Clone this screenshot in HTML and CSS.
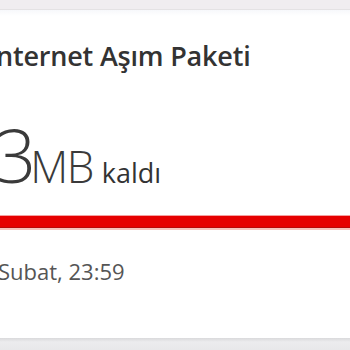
FILE: index.html
```html
<!DOCTYPE html>
<html lang="tr">
<head>
<meta charset="utf-8">
<link rel="stylesheet" href="styles.css">
</head>
<body>
<div class="page">
  <div class="topband"></div>
  <div class="card">
    <h1 class="title">İnternet Aşım Paketi</h1>
    <div class="amount"><span class="num">3</span><span class="unit">MB</span><span class="left">kaldı</span></div>
    <div class="bar"></div>
    <div class="date">Subat, 23:59</div>
  </div>
  <div class="bottomband"></div>
</div>
</body>
</html>
```
FILE: styles.css
```css
html, body {
  margin: 0;
  padding: 0;
  width: 350px;
  height: 350px;
  overflow: hidden;
  background: #e9e8ea;
}
.page {
  display: flex;
  flex-direction: column;
  height: 350px;
}
.topband {
  height: 9px;
  background: #f0edf0;
  border-bottom: 1px solid #e4e2e4;
}
.card {
  height: 328px;
  background: linear-gradient(#f7f8fb, #ffffff 6px);
  overflow: hidden;
  display: flex;
  flex-direction: column;
  font-family: "Open Sans", "Noto Sans", sans-serif;
}
.title {
  margin: 28px 0 0 -12px;
  font-size: 27px;
  font-weight: 600;
  color: #333333;
  line-height: 36px;
  white-space: nowrap;
  letter-spacing: -0.2px;
}
.amount {
  margin: 49px 0 0 -6px;
  display: flex;
  align-items: baseline;
  color: #3a3a3a;
  white-space: nowrap;
  height: 64px;
}
.num {
  font-size: 74px;
  font-weight: 300;
  line-height: 64px;
  letter-spacing: -6px;
}
.unit {
  font-size: 44px;
  font-weight: 300;
  line-height: 46px;
  letter-spacing: -1.5px;
}
.left {
  font-size: 27px;
  font-weight: 400;
  margin-left: 9px;
  color: #333333;
}
.bar {
  margin-top: 28px;
  height: 11px;
  background: #e60000;
  border-top: 1px solid #f5a0a0;
  border-bottom: 1px solid #b80808;
  box-shadow: 0 2px 0 #f6c2bc;
}
.date {
  margin: 28px 0 0 -2px;
  font-size: 22px;
  color: #555555;
  line-height: 30px;
  white-space: nowrap;
}
.bottomband {
  flex: 1;
  background: linear-gradient(#d9d9db, #ececee 4px, #e8e8ea);
}
```
